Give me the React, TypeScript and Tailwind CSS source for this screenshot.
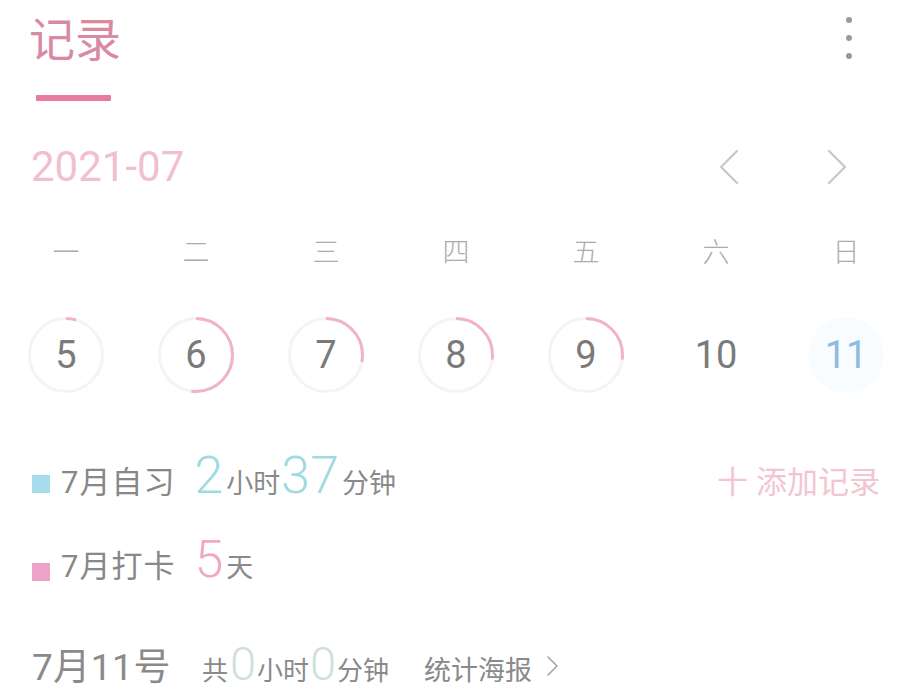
import React from "react";

const FONT = { fontFamily: "Roboto, 'Noto Sans CJK SC', sans-serif" };

type Day = { n: string; pct: number; today?: boolean };

const days: Day[] = [
  { n: "5", pct: 0.045 },
  { n: "6", pct: 0.52 },
  { n: "7", pct: 0.28 },
  { n: "8", pct: 0.27 },
  { n: "9", pct: 0.27 },
  { n: "10", pct: -1 },
  { n: "11", pct: -1, today: true },
];

function DayCircle({ d }: { d: Day }) {
  const r = 36.5;
  const c = 2 * Math.PI * r;
  return (
    <div className="relative w-[76px] h-[76px] flex items-center justify-center">
      {d.pct >= 0 && (
        <svg width="76" height="76" viewBox="0 0 76 76" className="absolute inset-0">
          <circle cx="38" cy="38" r={r} fill="none" stroke="#f4f4f5" strokeWidth="3" />
          <circle
            cx="38"
            cy="38"
            r={r}
            fill="none"
            stroke="#f2b3c6"
            strokeWidth="3"
            strokeDasharray={`${c * d.pct} ${c}`}
            transform="rotate(-90 38 38)"
          />
        </svg>
      )}
      {d.today && (
        <div className="absolute inset-0 rounded-full bg-[#f8fcfe]" />
      )}
      <span
        className={`relative text-[38px] leading-none ${d.today ? "text-[#8fbbe0]" : "text-[#7a7a7a]"}`}
      >
        {d.n}
      </span>
    </div>
  );
}

function Chevron({ dir }: { dir: "l" | "r" }) {
  return (
    <svg width="22" height="36" viewBox="0 0 22 36" fill="none">
      <path
        d={dir === "l" ? "M19 2 L3 18 L19 34" : "M3 2 L19 18 L3 34"}
        stroke="#c9c9c9"
        strokeWidth="2.4"
        strokeLinecap="round"
        strokeLinejoin="round"
      />
    </svg>
  );
}

export default function App() {
  return (
    <div className="w-[900px] h-[692px] bg-white overflow-hidden" style={FONT}>
      {/* header */}
      <div className="flex justify-between items-start">
        <div className="pl-[29px] pt-[13px]">
          <div className="text-[46px] leading-[54px] text-[#d98aa2]">记录</div>
          <div className="mt-[28px] ml-[7px] w-[75px] h-[6px] rounded-[1px] bg-[#e77d9d]" />
        </div>
        <div className="pr-[48px] pt-[17px] flex flex-col gap-[12px]">
          <div className="w-[6px] h-[6px] rounded-full bg-[#9a9a9a]" />
          <div className="w-[6px] h-[6px] rounded-full bg-[#9a9a9a]" />
          <div className="w-[6px] h-[6px] rounded-full bg-[#9a9a9a]" />
        </div>
      </div>

      {/* month row */}
      <div className="mt-[44px] h-[44px] flex items-center justify-between pl-[31px] pr-[52px]">
        <div className="text-[42px] leading-[44px] text-[#f1bfcd]">2021-07</div>
        <div className="flex items-center gap-[86px]">
          <Chevron dir="l" />
          <Chevron dir="r" />
        </div>
      </div>

      {/* weekdays */}
      <div className="mt-[49px] h-[30px] flex justify-between px-[28px] pr-[16px]">
        {["一", "二", "三", "四", "五", "六", "日"].map((w) => (
          <div key={w} className="w-[76px] text-center text-[27px] leading-[30px] font-light text-[#ababab]">
            {w}
          </div>
        ))}
      </div>

      {/* days */}
      <div className="mt-[49px] flex justify-between px-[28px] pr-[16px]">
        {days.map((d) => (
          <DayCircle key={d.n} d={d} />
        ))}
      </div>

      {/* stat row 1 */}
      <div className="mt-[57px] h-[60px] flex items-baseline justify-between pl-[32px] pr-[20px]">
        <div className="flex items-baseline">
          <span className="w-[18px] h-[18px] bg-[#a7dcef] inline-block self-center mt-[16px]" />
          <span className="ml-[11px] text-[31px] tracking-[1px] leading-none text-[#888]">7月自习</span>
          <span className="ml-[19px] text-[52px] leading-none font-light text-[#9fdce2]">2</span>
          <span className="ml-[3px] text-[27px] leading-none text-[#8a8a8a]">小时</span>
          <span className="ml-[1px] text-[52px] leading-none font-light text-[#9fdce2]">37</span>
          <span className="ml-[3px] text-[27px] leading-none text-[#8a8a8a]">分钟</span>
        </div>
        <div className="text-[31px] leading-none text-[#f2c5d1]">
          <span>十</span>
          <span className="ml-[8px]">添加记录</span>
        </div>
      </div>

      {/* stat row 2 */}
      <div className="mt-[24px] h-[60px] flex items-baseline pl-[32px]">
        <span className="w-[18px] h-[18px] bg-[#f0a3c8] inline-block self-center mt-[16px]" />
        <span className="ml-[11px] text-[31px] tracking-[1px] leading-none text-[#888]">7月打卡</span>
        <span className="ml-[19px] text-[52px] leading-none font-light text-[#f0a9c1]">5</span>
        <span className="ml-[3px] text-[27px] leading-none text-[#8a8a8a]">天</span>
      </div>

      {/* bottom row */}
      <div className="mt-[50px] h-[52px] flex items-end pl-[32px] pb-[12px]">
        <div className="flex items-baseline">
          <span className="text-[37px] tracking-[0.5px] leading-[0.9] text-[#8a8a8a]">7月11号</span>
          <span className="ml-[31px] text-[26px] leading-[0.9] text-[#8a8a8a]">共</span>
          <span className="ml-[2px] text-[47px] leading-[0.75] font-light text-[#cfe0dc]">0</span>
          <span className="ml-[1px] text-[26px] leading-[0.9] text-[#8a8a8a]">小时</span>
          <span className="ml-[1px] text-[47px] leading-[0.75] font-light text-[#cfe0dc]">0</span>
          <span className="ml-[1px] text-[26px] leading-[0.9] text-[#8a8a8a]">分钟</span>
          <span className="ml-[35px] text-[27px] leading-[0.9] text-[#8a8a8a]">统计海报</span>
          <span className="ml-[14px] self-center mt-[2px]">
            <svg width="13" height="22" viewBox="0 0 13 22" fill="none">
              <path d="M2 2 L11 11 L2 20" stroke="#a5a5a5" strokeWidth="1.6" strokeLinecap="round" strokeLinejoin="round" />
            </svg>
          </span>
        </div>
      </div>
    </div>
  );
}
